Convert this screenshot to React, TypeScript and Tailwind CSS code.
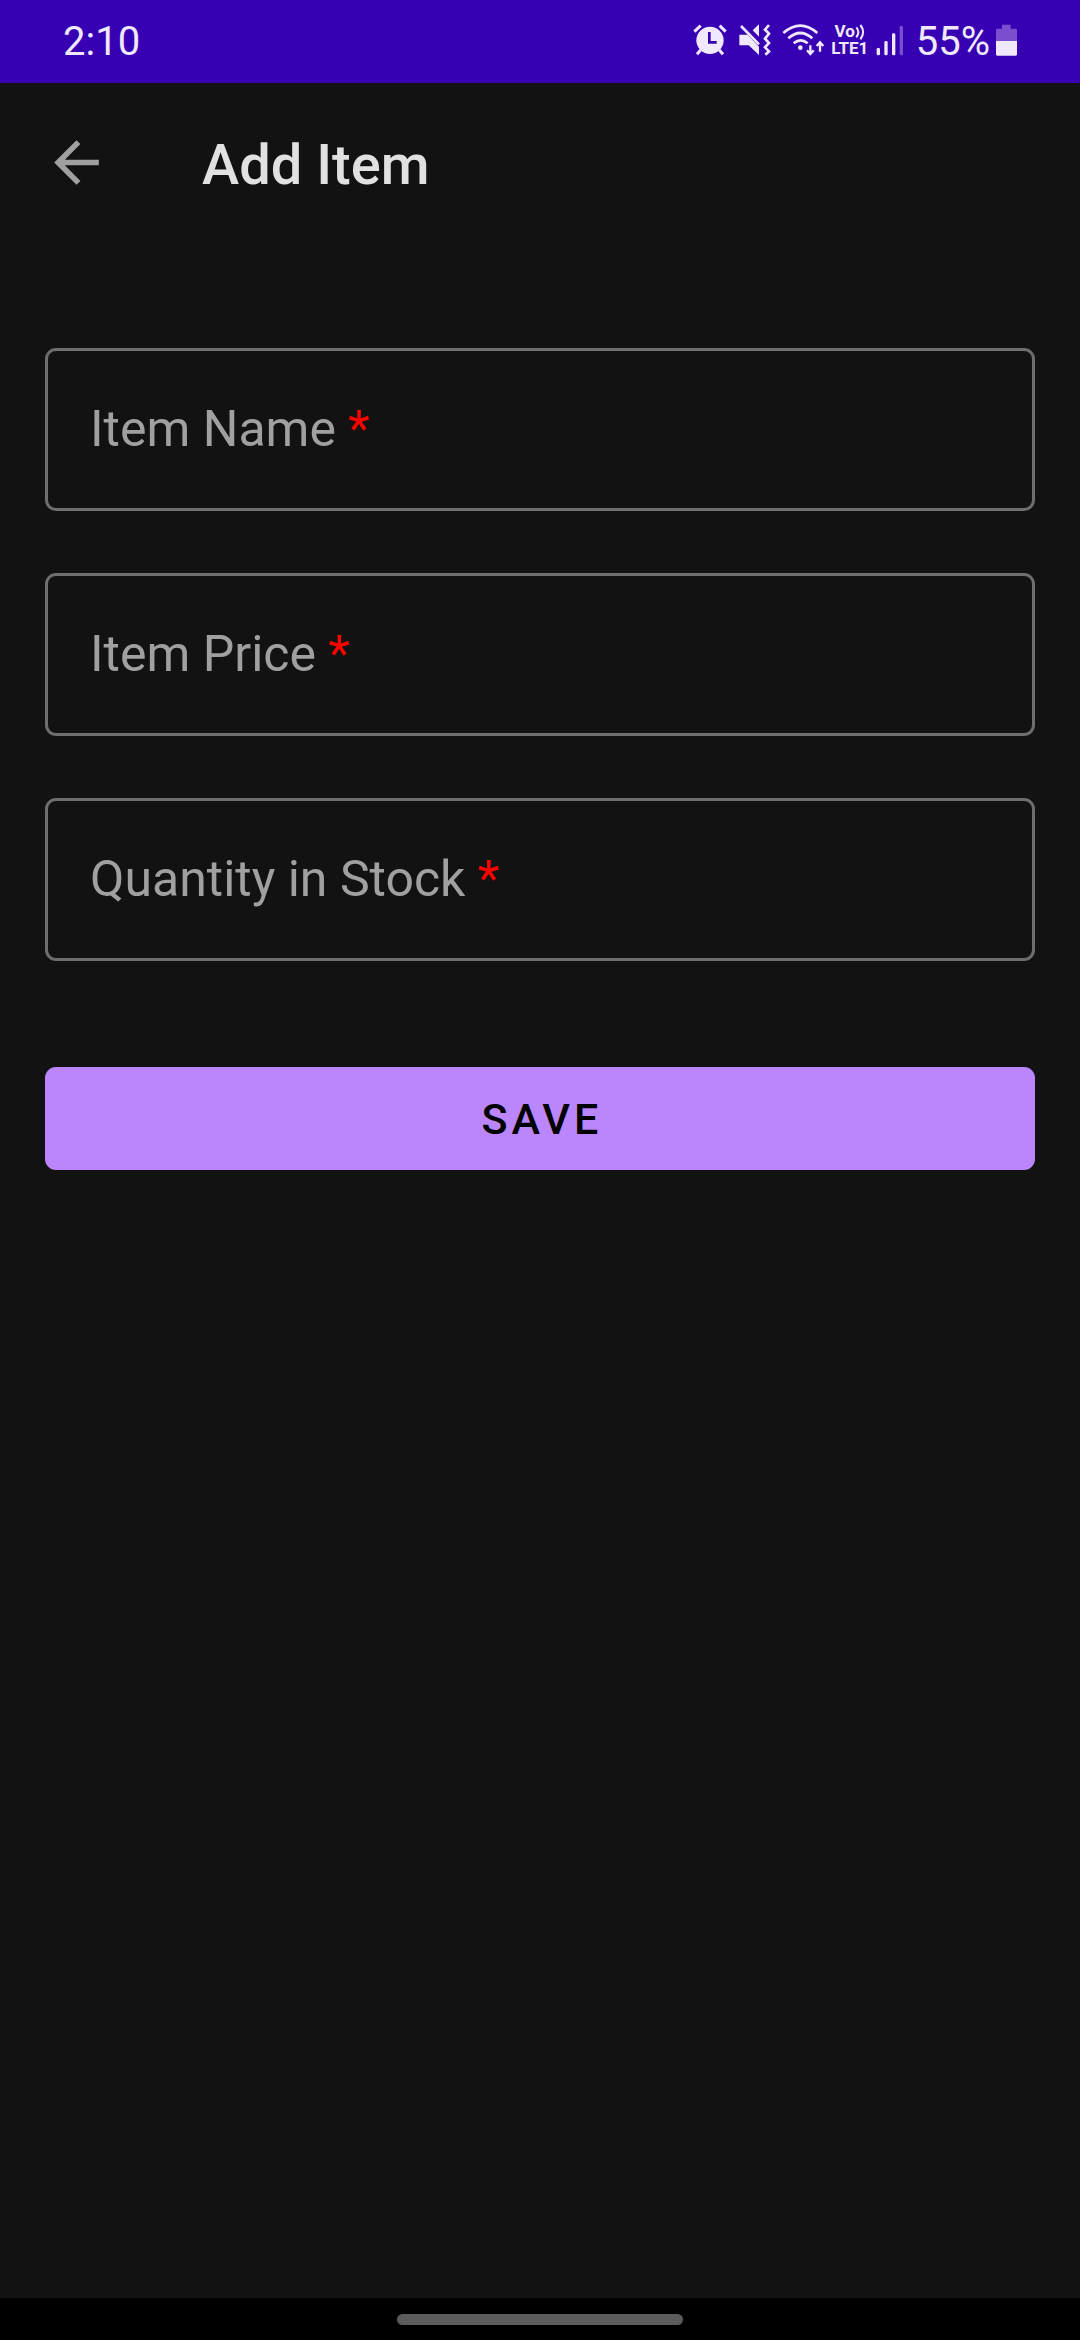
import { useState } from "react";

function AlarmIcon() {
  return (
    <svg viewBox="39 42 102 96" className="h-8 w-[34px]" fill="none" stroke="#f0e8fc" aria-label="Alarm set" role="img">
      <circle cx="90" cy="91" r="41" fill="#f0e8fc" stroke="none" />
      <path d="M43 65 62 47M119 47l18 18" strokeWidth="9" />
      <path d="m62 120-11 13M118 120l11 13" strokeWidth="9" />
      <path d="M88 66v31h22" stroke="#3700b3" strokeWidth="8" />
    </svg>
  );
}

function VibrateIcon() {
  return (
    <svg viewBox="174 42 99 96" className="h-8 w-[33px]" fill="#f0e8fc" aria-label="Vibrate" role="img">
      <path d="M178 74h25l34 36v25l-31-29h-28z" />
      <path d="M218 61 237 43v37z" />
      <path d="m183 48 54 55" fill="none" stroke="#f0e8fc" strokeWidth="8" />
      <path d="m267 45-12 14 12 12-12 15 12 13-12 13 12 12-11 10" fill="none" stroke="#f0e8fc" strokeWidth="8" />
    </svg>
  );
}

function WifiIcon() {
  return (
    <svg viewBox="306 42 129 96" className="h-8 w-[43px]" fill="none" stroke="#f0e8fc" strokeWidth="8" aria-label="Wi-Fi" role="img">
      <path d="M310 69q51-44 102 0M325 85q36-32 72 0" />
      <path d="M341 100q21-18 42 0" />
      <circle cx="361" cy="113" r="7" fill="#f0e8fc" stroke="none" />
      <path d="M391 106v25M381 121l10 11 10-11" strokeWidth="7" />
      <path d="M420 125V98M410 108l10-11 10 11" strokeWidth="7" />
    </svg>
  );
}

function VolteIcon() {
  return (
    <span className="flex w-[42px] flex-col items-center text-[17px] leading-[17px] font-bold">
      <span className="flex items-center">
        Vo
        <svg viewBox="0 0 30 48" className="h-4 w-[10px]" fill="none" stroke="#f0e8fc" strokeWidth="6" aria-hidden="true">
          <path d="M4 10q12 14 0 30M16 3q17 21 0 43" />
        </svg>
      </span>
      <span>LTE1</span>
    </span>
  );
}

function SignalIcon() {
  return (
    <svg viewBox="78 42 84 96" className="h-8 w-7" fill="#f0e8fc" aria-label="Mobile signal" role="img">
      <rect x="80" y="114" width="10" height="22" rx="4" />
      <rect x="103" y="93" width="10" height="43" rx="4" />
      <rect x="126" y="70" width="10" height="66" rx="4" />
      <rect x="149" y="48" width="10" height="88" rx="4" opacity=".35" />
    </svg>
  );
}

function BatteryIcon() {
  return (
    <svg viewBox="438 42 63 96" className="h-8 w-[21px]" aria-label="Battery" role="img">
      <path d="M438 93V60q0-4 4-4h14V44h26v12h15q4 0 4 4v33z" fill="#7c4dcc" />
      <path d="M438 93h63v40q0 4-4 4h-55q-4 0-4-4z" fill="#f0e8fc" />
    </svg>
  );
}

function StatusBar() {
  return (
    <header className="flex h-[83px] items-center justify-between bg-[#3700b3] px-[63px] pb-[3px] text-[#f0e8fc]">
      <span className="pt-1 text-[40px] leading-12">2:10</span>
      <div className="flex items-center">
        <div className="flex items-center gap-[11px]">
          <AlarmIcon />
          <VibrateIcon />
          <WifiIcon />
        </div>
        <div className="ml-1 flex items-center gap-[5px]">
          <VolteIcon />
          <SignalIcon />
        </div>
        <span className="ml-3 pt-1 text-[40px] leading-12">55%</span>
        <span className="ml-[6px]">
          <BatteryIcon />
        </span>
      </div>
    </header>
  );
}

function Field({ id, label, inputMode }: { id: string; label: string; inputMode?: "text" | "decimal" | "numeric" }) {
  const [value, setValue] = useState("");
  return (
    <div className="grid">
      <input
        id={id}
        required
        inputMode={inputMode}
        placeholder=" "
        value={value}
        onChange={(e) => setValue(e.target.value)}
        className="peer col-start-1 row-start-1 h-[163px] w-full rounded-[11px] border-3 border-[#6e6e6e] bg-transparent px-[42px] text-[50px] text-[#e1e1e1] outline-none focus:border-[#bb86fc]"
      />
      <label
        htmlFor={id}
        className="pointer-events-none invisible col-start-1 row-start-1 self-center px-[45px] pb-[2px] text-[50px] leading-[60px] text-[#a0a0a0] peer-placeholder-shown:visible"
      >
        {label} <span className="text-[#ff0000]">*</span>
      </label>
    </div>
  );
}

export default function App() {
  return (
    <div className="flex min-h-screen flex-col bg-[#121212] font-[Roboto,sans-serif]">
      <StatusBar />
      <nav className="flex h-[158px] items-center gap-[92px] px-[43px]">
        <button type="button" aria-label="Back" className="size-[67px] text-[#a0a0a0]">
          <svg viewBox="0 0 24 24" className="size-full" fill="currentColor" aria-hidden="true">
            <path d="M20 11H7.83l5.59-5.59L12 4l-8 8 8 8 1.41-1.41L7.83 13H20v-2z" />
          </svg>
        </button>
        <h1 className="pt-[5px] text-[56px] leading-[66px] font-medium text-[#e1e1e1]">Add Item</h1>
      </nav>
      <form className="flex flex-1 flex-col px-[45px] pt-[107px]" onSubmit={(e) => e.preventDefault()}>
        <div className="flex flex-col gap-[62px]">
          <Field id="item-name" label="Item Name" />
          <Field id="item-price" label="Item Price" inputMode="decimal" />
          <Field id="item-quantity" label="Quantity in Stock" inputMode="numeric" />
        </div>
        <button
          type="submit"
          className="mt-[106px] h-[103px] rounded-[11px] bg-[#bb86fc] pt-[2px] pl-1 text-[43px] font-medium tracking-[4px] text-black"
        >
          SAVE
        </button>
      </form>
      <footer className="flex h-[42px] items-center justify-center bg-black">
        <div className="h-[11px] w-[286px] rounded-full bg-[#5c5c5c]" />
      </footer>
    </div>
  );
}
